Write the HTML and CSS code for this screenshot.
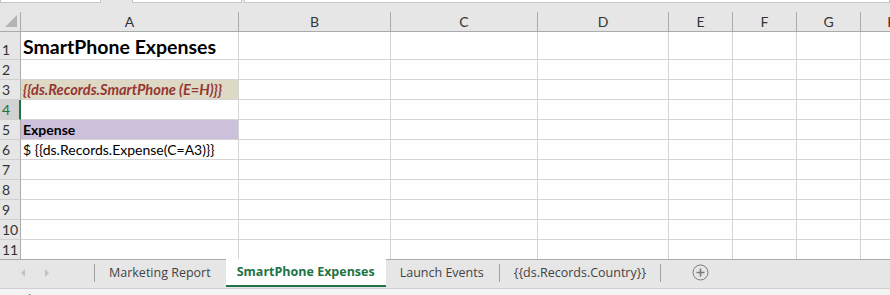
FILE: index.html
```html
<!DOCTYPE html>
<html lang="en">
<head>
  <meta charset="UTF-8">
  <meta name="viewport" content="width=device-width, initial-scale=1.0">
  <title>SmartPhone Expenses</title>
  <link rel="stylesheet" href="styles.css">
</head>
<body>

  <div class="top-strip">
    <div class="name-box"></div>
    <div class="fx-gap"></div>
    <div class="fx-box"></div>
    <div class="fx-input"></div>
  </div>

  <div class="sheet">
    <!-- column headers -->
    <div class="corner"><span class="corner-tri"></span></div>
    <div class="col-head">A</div>
    <div class="col-head">B</div>
    <div class="col-head">C</div>
    <div class="col-head">D</div>
    <div class="col-head">E</div>
    <div class="col-head">F</div>
    <div class="col-head">G</div>
    <div class="col-head">H</div>

    <!-- row 1 -->
    <div class="row-head tall">1</div>
    <div class="cell tall title">SmartPhone Expenses</div>
    <div class="cell tall"></div><div class="cell tall"></div><div class="cell tall"></div>
    <div class="cell tall"></div><div class="cell tall"></div><div class="cell tall"></div><div class="cell tall"></div>

    <div class="row-head">2</div>
    <div class="cell"></div><div class="cell"></div><div class="cell"></div><div class="cell"></div>
    <div class="cell"></div><div class="cell"></div><div class="cell"></div><div class="cell"></div>

    <div class="row-head">3</div>
    <div class="cell tag">{{ds.Records.SmartPhone (E=H)}}</div>
    <div class="cell"></div><div class="cell"></div><div class="cell"></div>
    <div class="cell"></div><div class="cell"></div><div class="cell"></div><div class="cell"></div>

    <div class="row-head active">4</div>
    <div class="cell"></div><div class="cell"></div><div class="cell"></div><div class="cell"></div>
    <div class="cell"></div><div class="cell"></div><div class="cell"></div><div class="cell"></div>

    <div class="row-head">5</div>
    <div class="cell heading">Expense</div>
    <div class="cell"></div><div class="cell"></div><div class="cell"></div>
    <div class="cell"></div><div class="cell"></div><div class="cell"></div><div class="cell"></div>

    <div class="row-head">6</div>
    <div class="cell">$ {{ds.Records.Expense(C=A3)}}</div>
    <div class="cell"></div><div class="cell"></div><div class="cell"></div>
    <div class="cell"></div><div class="cell"></div><div class="cell"></div><div class="cell"></div>

    <div class="row-head">7</div>
    <div class="cell"></div><div class="cell"></div><div class="cell"></div><div class="cell"></div>
    <div class="cell"></div><div class="cell"></div><div class="cell"></div><div class="cell"></div>

    <div class="row-head">8</div>
    <div class="cell"></div><div class="cell"></div><div class="cell"></div><div class="cell"></div>
    <div class="cell"></div><div class="cell"></div><div class="cell"></div><div class="cell"></div>

    <div class="row-head">9</div>
    <div class="cell"></div><div class="cell"></div><div class="cell"></div><div class="cell"></div>
    <div class="cell"></div><div class="cell"></div><div class="cell"></div><div class="cell"></div>

    <div class="row-head">10</div>
    <div class="cell"></div><div class="cell"></div><div class="cell"></div><div class="cell"></div>
    <div class="cell"></div><div class="cell"></div><div class="cell"></div><div class="cell"></div>

    <div class="row-head last">11</div>
    <div class="cell last"></div><div class="cell last"></div><div class="cell last"></div><div class="cell last"></div>
    <div class="cell last"></div><div class="cell last"></div><div class="cell last"></div><div class="cell last"></div>
  </div>

  <div class="tab-bar">
    <div class="tab-nav">
      <span class="arrow left"></span>
      <span class="arrow right"></span>
    </div>
    <div class="tab first">Marketing Report</div>
    <div class="tab selected">SmartPhone Expenses</div>
    <div class="tab plain">Launch Events</div>
    <div class="tab sep">{{ds.Records.Country}}</div>
    <div class="add-sheet">
      <svg width="17" height="17" viewBox="0 0 17 17">
        <circle cx="8.5" cy="8.5" r="7.5" fill="none" stroke="#7a7a7a" stroke-width="1"/>
        <path d="M8.5 4.5v8M4.5 8.5h8" stroke="#7a7a7a" stroke-width="1.6"/>
      </svg>
    </div>
  </div>

  <div class="status-bar">Ready</div>

</body>
</html>
```

FILE: styles.css
```css
body {
  margin: 0;
  padding: 0;
  width: 890px;
  height: 295px;
  overflow: hidden;
  background-color: #e6e6e6;
  font-family: Lato, "Open Sans", sans-serif;
}
.top-strip {
  display: flex;
  height: 12px;
  background-color: #e6e6e6;
}
.top-strip div {
  height: 2px;
  background-color: white;
  border: 1px solid #c6c6c6;
  border-top: none;
}
.name-box {
  width: 99px;
}
.top-strip .fx-gap {
  width: 31px;
  background: none;
  border: none;
}
.fx-box {
  width: 108px;
}
.fx-input {
  flex: 1;
  margin-left: 2px;
}
.sheet {
  display: grid;
  width: 925px;
  grid-template-columns: 21px 218px 152px 147px 131px 64px 64px 64px 64px;
  grid-template-rows: 20px 28px repeat(9, 20px) 19px;
  background-color: white;
  border-bottom: 1px solid #ababab;
}
.corner {
  background-color: #e6e6e6;
  border-right: 1px solid #ababab;
  border-bottom: 1px solid #ababab;
  position: relative;
}
.corner-tri {
  position: absolute;
  left: 5px;
  top: 3px;
  width: 0;
  height: 0;
  border-left: 12px solid transparent;
  border-bottom: 12px solid #b4b4b4;
}
.col-head {
  background-color: #e6e6e6;
  border-right: 1px solid #ababab;
  border-bottom: 1px solid #ababab;
  color: #333;
  font-size: 14px;
  text-align: center;
  line-height: 19px;
}
.row-head {
  background-color: #e6e6e6;
  border-right: 1px solid #ababab;
  border-bottom: 1px solid #d0d0d0;
  color: #333;
  font-size: 14px;
  padding-left: 2px;
  display: flex;
  align-items: flex-end;
  line-height: 18px;
}
.row-head.active {
  background-color: #d2d2d2;
  color: #217346;
  border-right: 2px solid #217346;
}
.cell {
  border-right: 1px solid #d4d4d4;
  border-bottom: 1px solid #d4d4d4;
  font-size: 14px;
  color: #000;
  padding-left: 2px;
  display: flex;
  align-items: flex-end;
  line-height: 18px;
  white-space: nowrap;
}
.cell.last, .row-head.last {
  border-bottom: none;
}
.title {
  font-size: 19.5px;
  font-weight: bold;
  line-height: 25px;
}
.tag {
  background-color: #ddd9c4;
  color: #963634;
  font-style: italic;
  font-weight: bold;
  font-size: 14.6px;
}
.heading {
  background-color: #ccc0da;
  font-weight: bold;
}
.tab-bar {
  display: flex;
  height: 28px;
  background-color: #e6e6e6;
  border-bottom: 1px solid #d0d0d0;
  font-family: "Open Sans", sans-serif;
  font-size: 12.5px;
  color: #444;
}
.tab-nav {
  width: 95px;
  display: flex;
  align-items: center;
  gap: 20px;
  padding-left: 21px;
  box-sizing: border-box;
  border-right: 1px solid #a0a0a0;
  margin: 4px 0 6px;
}
.arrow {
  width: 0;
  height: 0;
  border-top: 4px solid transparent;
  border-bottom: 4px solid transparent;
}
.arrow.left {
  border-right: 4px solid #c2c2c2;
}
.arrow.right {
  border-left: 4px solid #c2c2c2;
}
.tab {
  line-height: 25px;
  margin-bottom: 3px;
  white-space: nowrap;
}
.tab.first {
  padding: 0 15px 0 14px;
}
.tab.selected {
  background-color: white;
  color: #217346;
  font-weight: bold;
  border-bottom: 2px solid #217346;
  margin-bottom: 1px;
  margin-top: -1px;
  line-height: 26px;
  padding: 0 11px;
}
.tab.plain {
  padding: 0 15px 0 14px;
}
.tab.sep {
  border-left: 1px solid #a0a0a0;
  border-right: 1px solid #a0a0a0;
  margin: 4px 0 6px;
  line-height: 17px;
  padding: 0 14px;
}
.add-sheet {
  display: flex;
  align-items: center;
  padding-left: 31px;
  margin-bottom: 3px;
}
.status-bar {
  height: 9px;
  background-color: #f3f3f3;
  font-family: "Open Sans", sans-serif;
  font-size: 12px;
  color: #444;
  padding-left: 3px;
  line-height: 22px;
  overflow: hidden;
}
```
